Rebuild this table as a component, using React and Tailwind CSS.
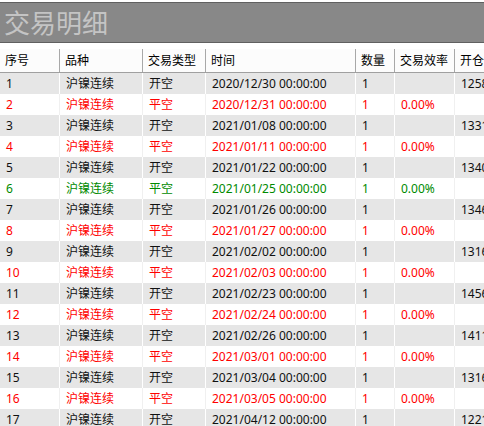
const rows = [
  ["1", "开空", "2020/12/30 00:00:00", "", "12580"],
  ["2", "平空", "2020/12/31 00:00:00", "0.00%", ""],
  ["3", "开空", "2021/01/08 00:00:00", "", "13310"],
  ["4", "平空", "2021/01/11 00:00:00", "0.00%", ""],
  ["5", "开空", "2021/01/22 00:00:00", "", "13400"],
  ["6", "平空", "2021/01/25 00:00:00", "0.00%", ""],
  ["7", "开空", "2021/01/26 00:00:00", "", "13460"],
  ["8", "平空", "2021/01/27 00:00:00", "0.00%", ""],
  ["9", "开空", "2021/02/02 00:00:00", "", "13160"],
  ["10", "平空", "2021/02/03 00:00:00", "0.00%", ""],
  ["11", "开空", "2021/02/23 00:00:00", "", "14560"],
  ["12", "平空", "2021/02/24 00:00:00", "0.00%", ""],
  ["13", "开空", "2021/02/26 00:00:00", "", "14110"],
  ["14", "平空", "2021/03/01 00:00:00", "0.00%", ""],
  ["15", "开空", "2021/03/04 00:00:00", "", "13160"],
  ["16", "平空", "2021/03/05 00:00:00", "0.00%", ""],
  ["17", "开空", "2021/04/12 00:00:00", "", "12210"],
];

const widths = ["w-[60px]", "w-[83px]", "w-[63px]", "w-[150px]", "w-[39px]", "w-[60px]", "w-[80px]"];
const headers = ["序号", "品种", "交易类型", "时间", "数量", "交易效率", "开仓价格"];

function App() {
  return (
    <div
      className="w-[484px] h-[426px] overflow-hidden bg-white"
      style={{ fontFamily: '"Noto Sans", "Noto Sans CJK SC", sans-serif' }}
    >
      <div className="h-[2px] bg-white"></div>
      <div className="h-[41px] bg-[#888888] border-t border-b border-[#606060] flex items-center pl-[4px]">
        <span className="text-[26px] leading-none text-[#c4c4c4]">交易明细</span>
      </div>
      <div className="h-[6px] bg-white"></div>
      <div className="flex w-[520px] h-[24px] bg-[#fcfcfc] border-b border-[#a0a0a0]">
        {headers.map((h, i) => (
          <div
            key={i}
            className={`${widths[i]} shrink-0 flex items-center pl-[5px] text-[12px] text-black border-r border-[#a8a8a8] whitespace-nowrap overflow-hidden`}
          >
            {h}
          </div>
        ))}
      </div>
      {rows.map((r, idx) => {
        const even = idx % 2 === 0;
        const color = even ? "text-[#111111]" : idx === 5 ? "text-[#008a00]" : "text-[#ff0000]";
        const bg = even ? "bg-[#e6e6e6]" : "bg-white";
        const line = even ? "border-white" : "border-[#f0f0f0]";
        const cells = [r[0], "沪镍连续", r[1], r[2], "1", r[3], r[4]];
        return (
          <div key={idx} className={`flex w-[520px] h-[21px] ${bg} ${color}`}>
            {cells.map((c, i) => (
              <div
                key={i}
                className={`${widths[i]} shrink-0 flex items-center pl-[6px] text-[12px] border-r ${line} whitespace-nowrap overflow-hidden`}
              >
                {c}
              </div>
            ))}
          </div>
        );
      })}
    </div>
  );
}

export default App;
